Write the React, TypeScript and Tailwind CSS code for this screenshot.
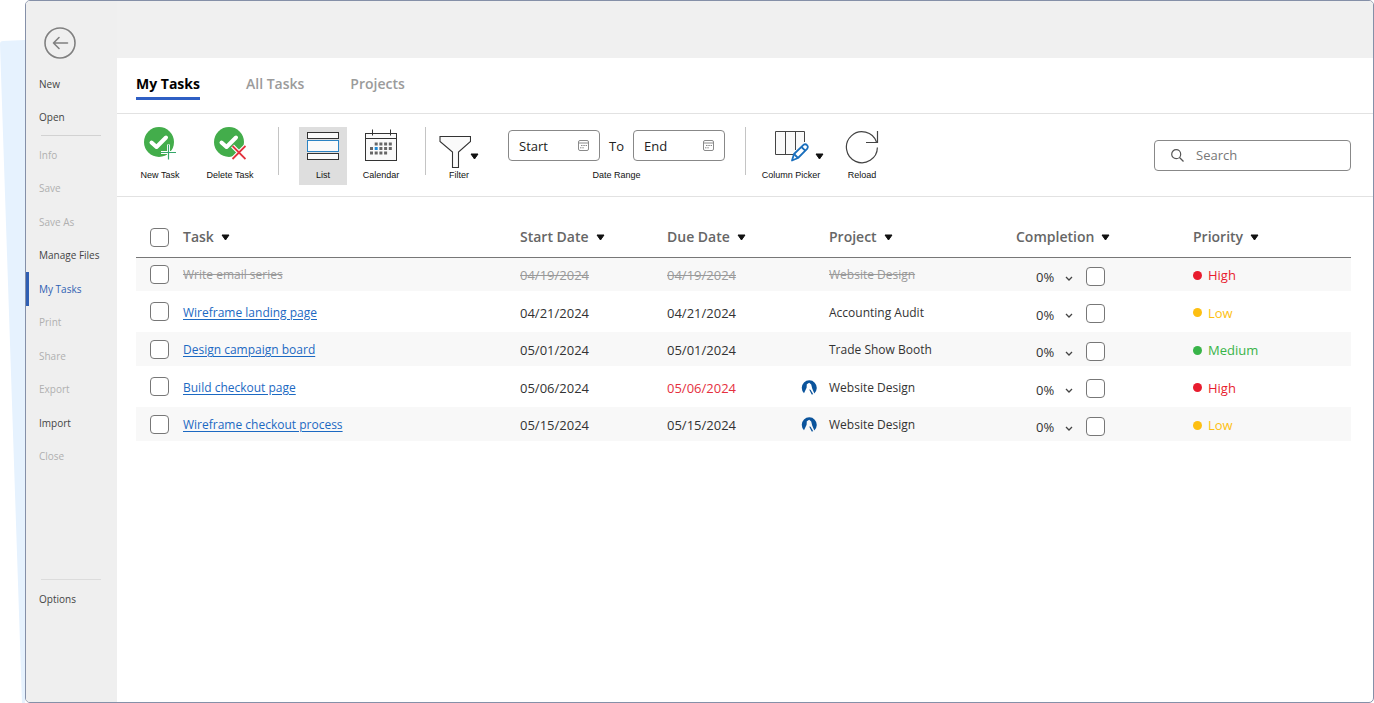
import { useState } from 'react';
import { clsx } from 'clsx';

type Priority = 'High' | 'Low' | 'Medium';

type Task = {
  name: string;
  start: string;
  due: string;
  project: string;
  priority: Priority;
  done?: boolean;
  overdue?: boolean;
  linked?: boolean;
};

const tasks: Task[] = [
  { name: 'Write email series', start: '04/19/2024', due: '04/19/2024', project: 'Website Design', priority: 'High', done: true },
  { name: 'Wireframe landing page', start: '04/21/2024', due: '04/21/2024', project: 'Accounting Audit', priority: 'Low' },
  { name: 'Design campaign board', start: '05/01/2024', due: '05/01/2024', project: 'Trade Show Booth', priority: 'Medium' },
  { name: 'Build checkout page', start: '05/06/2024', due: '05/06/2024', project: 'Website Design', priority: 'High', overdue: true, linked: true },
  { name: 'Wireframe checkout process', start: '05/15/2024', due: '05/15/2024', project: 'Website Design', priority: 'Low', linked: true },
];

const fileMenu = [
  { label: 'Info', enabled: false },
  { label: 'Save', enabled: false },
  { label: 'Save As', enabled: false },
  { label: 'Manage Files', enabled: true },
  { label: 'My Tasks', enabled: true },
  { label: 'Print', enabled: false },
  { label: 'Share', enabled: false },
  { label: 'Export', enabled: false },
  { label: 'Import', enabled: true },
  { label: 'Close', enabled: false },
];

const priorityText: Record<Priority, string> = {
  High: 'text-[#e81c2e]',
  Low: 'text-[#fdbf12]',
  Medium: 'text-[#38b449]',
};

function Caret() {
  return (
    <svg width="9" height="7" viewBox="0 0 9 7" className="shrink-0" aria-hidden="true">
      <path d="M1 1h7L4.5 6z" fill="#111" stroke="#111" strokeWidth="1" strokeLinejoin="round" />
    </svg>
  );
}

function CheckBadge() {
  return (
    <>
      <circle cx="15" cy="15" r="15" fill="#43ad4b" />
      <path d="M7.5 15.5l5 4.5 9.5-9.5" fill="none" stroke="#fff" strokeWidth="4" strokeLinecap="round" strokeLinejoin="round" />
    </>
  );
}

function NewTaskIcon() {
  return (
    <svg width="32" height="42" viewBox="0 0 32 42">
      <CheckBadge />
      <path d="M24.5 17.5v15M17 25.5h15" stroke="#fff" strokeWidth="3" />
      <path d="M24.5 18v14.5M17 25.5h15" stroke="#35a76a" strokeWidth="1.2" />
    </svg>
  );
}

function DeleteTaskIcon() {
  return (
    <svg width="32" height="42" viewBox="0 0 32 42">
      <CheckBadge />
      <path d="M18.5 19l13 13M31.5 19l-13 13" stroke="#fff" strokeWidth="4" />
      <path d="M18.5 19l13 13M31.5 19l-13 13" stroke="#e2343f" strokeWidth="1.8" />
    </svg>
  );
}

function ListIcon() {
  return (
    <svg width="32" height="42" viewBox="0 0 32 42" fill="#fafafa">
      <rect x="0.5" y="5.5" width="31" height="6" stroke="#333" />
      <rect x="0.5" y="13.5" width="31" height="11" stroke="#2b83c4" />
      <rect x="0.5" y="26.5" width="31" height="6" stroke="#333" />
    </svg>
  );
}

function CalendarIcon() {
  const cells = [
    [1, 0], [2, 0], [3, 0], [4, 0],
    [0, 1], [1, 1], [2, 1], [3, 1], [4, 1],
    [0, 2], [1, 2], [2, 2], [3, 2],
  ];
  return (
    <svg width="32" height="42" viewBox="0 0 32 42">
      <rect x="0.5" y="6.5" width="31" height="27" fill="#fafafa" stroke="#333" />
      <path d="M0.5 11.5h31M7.5 2.5v6M25.5 2.5v6" stroke="#333" />
      {cells.map(([col, row]) => (
        <rect
          key={`${col}-${row}`}
          x={5 + col * 4.7}
          y={15.5 + row * 4.5}
          width="3"
          height="3"
          fill={col === 1 && row === 1 ? '#1e88d4' : '#666'}
        />
      ))}
    </svg>
  );
}

function FilterIcon() {
  return (
    <svg width="32" height="42" viewBox="0 0 32 42">
      <path d="M1 9.5h30.5v5L19.5 25v15.5h-6V25L1 14.5z" fill="#fafafa" stroke="#333" strokeWidth="1.1" />
    </svg>
  );
}

function ColumnsIcon() {
  return (
    <svg width="34" height="42" viewBox="0 0 34 42">
      <path d="M18 27.5H.5v-23h29V15M10.5 4.5v23M20.5 4.5V23" fill="#fafafa" stroke="#444" />
      <g fill="#fff" stroke="#1a6fbd" strokeWidth="1.8" strokeLinejoin="round">
        <path d="M17 33.5l2-6.5L28.5 17.8c2.6-1.6 5.4 1 3.8 3.8L23 31z" />
        <path d="M19 27l4 4M26.5 20l4 3.8" />
      </g>
    </svg>
  );
}

function ReloadIcon() {
  return (
    <svg width="34" height="42" viewBox="0 0 34 42" fill="none" stroke="#444" strokeWidth="1.2">
      <path d="M32.4 20.5A15.500 15.500 0 1 1 31.5 15" />
      <path d="M32.5 4v11.5H21" />
    </svg>
  );
}

function MiniCalendar() {
  return (
    <svg width="11" height="11" viewBox="0 0 11 11" className="shrink-0" fill="none" stroke="#8a8a8a" aria-hidden="true">
      <rect x="0.5" y="0.5" width="10" height="10" rx="1.5" />
      <path d="M0.5 3h10" />
      <path d="M3 5.5h6M2 7.8h4.5" strokeDasharray="1.5 0.8" />
    </svg>
  );
}

function SourceIcon() {
  return (
    <svg width="16" height="16" viewBox="0 0 16 16" className="shrink-0" aria-hidden="true">
      <path d="M3 13.2A7.5 7.500 0 1 1 13.3 13.4L11.2 8.5 10.2 4.5 8.2 2.8 5.8 4.3 5.6 7.8z" fill="#0b549c" />
      <path d="M8.2 9.4l1.400.4 2.600 4.500-1.500.1z" fill="#0b549c" />
    </svg>
  );
}

function Checkbox({ label }: { label: string }) {
  return (
    <input
      type="checkbox"
      aria-label={label}
      className="block size-[19px] shrink-0 appearance-none rounded border border-[#777] bg-white checked:bg-[#2f5fc4]"
    />
  );
}

type ToolButtonProps = {
  label: string;
  className?: string;
  pressed?: boolean;
  onClick?: () => void;
  children: React.ReactNode;
};

function ToolButton({ label, className, pressed, onClick, children }: ToolButtonProps) {
  return (
    <button
      type="button"
      aria-pressed={pressed}
      onClick={onClick}
      className={clsx('flex h-[58px] shrink-0 flex-col items-center', pressed && 'bg-[#dedede]', className)}
    >
      <span className="flex h-[42px] items-center">{children}</span>
      <span className="whitespace-nowrap font-['Liberation_Sans',sans-serif] text-[9px] leading-3 text-[#111]">{label}</span>
    </button>
  );
}

function Divider() {
  return <div className="h-12 w-px shrink-0 bg-[#c4c4c4]" />;
}

function DateField({ label }: { label: string }) {
  return (
    <label className="flex h-[31px] w-[92px] items-center rounded border border-[#888] px-[10px]">
      <input
        type="text"
        aria-label={label}
        placeholder={label}
        className="w-full min-w-0 pt-[2px] text-[13px] text-[#222] outline-none placeholder:text-[#222]"
      />
      <MiniCalendar />
    </label>
  );
}

function SideItem({ label, enabled, active }: { label: string; enabled: boolean; active?: boolean }) {
  return (
    <button
      type="button"
      disabled={!enabled}
      className={clsx(
        'flex w-full items-center border-l-[3px] pl-[10px] text-left text-[10px] leading-4',
        active ? 'border-[#2f5fb3] text-[#2f5fb3]' : 'border-transparent',
        !active && (enabled ? 'text-[#444]' : 'text-[#b0b0b0]'),
      )}
    >
      {label}
    </button>
  );
}

function Sidebar() {
  return (
    <nav className="flex w-[91px] shrink-0 flex-col bg-[#efefef] pt-[26px]">
      <button type="button" aria-label="Back" className="ml-[18px] size-8">
        <svg width="32" height="32" viewBox="0 0 32 32" fill="none" stroke="#808080" strokeWidth="1.6">
          <circle cx="16" cy="16" r="15" />
          <path d="M23.5 16H9.500M15 10.5L9.500 16l5.500 5.500" strokeLinecap="round" strokeLinejoin="round" />
        </svg>
      </button>
      <div className="mt-2 grid auto-rows-[33px]">
        <SideItem label="New" enabled />
        <SideItem label="Open" enabled />
      </div>
      <hr className="mt-[2px] mr-4 ml-[15px] border-[#d2d2d2]" />
      <div className="mt-[2px] grid h-[335px] grid-rows-10">
        {fileMenu.map((item) => (
          <SideItem key={item.label} label={item.label} enabled={item.enabled} active={item.label === 'My Tasks'} />
        ))}
      </div>
      <hr className="mt-[106px] mr-4 ml-[15px] border-[#dcdcdc]" />
      <div className="mt-[2px] grid auto-rows-[33px]">
        <SideItem label="Options" enabled />
      </div>
    </nav>
  );
}

function Tabs() {
  const [current, setCurrent] = useState('My Tasks');
  return (
    <div className="flex h-[56px] gap-[46px] border-b border-[#e2e2e2] pt-3 pl-[19px]">
      {['My Tasks', 'All Tasks', 'Projects'].map((tab) => (
        <button
          key={tab}
          type="button"
          onClick={() => setCurrent(tab)}
          className={clsx(
            'h-[30px] border-b-[3px] text-[14px] leading-6',
            tab === current ? 'border-[#2f5fc4] font-bold text-black' : 'border-transparent font-semibold text-[#9b9b9b]',
          )}
        >
          {tab}
        </button>
      ))}
    </div>
  );
}

function Toolbar() {
  const [view, setView] = useState('List');
  return (
    <div className="flex h-[83px] items-start border-b border-[#e2e2e2] pt-[13px] pr-[22px] pl-[19px]">
      <ToolButton label="New Task" className="w-12">
        <NewTaskIcon />
      </ToolButton>
      <ToolButton label="Delete Task" className="ml-[18px] w-14">
        <DeleteTaskIcon />
      </ToolButton>
      <div className="mx-5">
        <Divider />
      </div>
      <ToolButton label="List" className="w-12" pressed={view === 'List'} onClick={() => setView('List')}>
        <ListIcon />
      </ToolButton>
      <ToolButton label="Calendar" className="ml-[10px] w-12" pressed={view === 'Calendar'} onClick={() => setView('Calendar')}>
        <CalendarIcon />
      </ToolButton>
      <div className="mr-[13px] ml-5">
        <Divider />
      </div>
      <ToolButton label="Filter" className="w-10">
        <FilterIcon />
        <span className="-ml-px pt-4">
          <Caret />
        </span>
      </ToolButton>
      <div className="ml-[29px] flex flex-col items-center pt-[3px]">
        <div className="flex items-center text-[13px] text-[#222]">
          <DateField label="Start" />
          <span className="w-[33px] pt-[2px] text-center">To</span>
          <DateField label="End" />
        </div>
        <span className="mt-2 font-['Liberation_Sans',sans-serif] text-[9px] leading-3 text-[#111]">Date Range</span>
      </div>
      <div className="mr-[14px] ml-5">
        <Divider />
      </div>
      <ToolButton label="Column Picker" className="w-[62px]">
        <span className="flex gap-[6px] pl-4">
          <ColumnsIcon />
          <span className="pt-[26px]">
            <Caret />
          </span>
        </span>
      </ToolButton>
      <ToolButton label="Reload" className="ml-5 w-10">
        <ReloadIcon />
      </ToolButton>
      <label className="mt-[13px] ml-auto flex h-[31px] w-[197px] items-center gap-3 rounded border border-[#888] pr-3 pl-4">
        <svg width="13" height="13" viewBox="0 0 13 13" className="shrink-0" fill="none" stroke="#555" strokeWidth="1.2">
          <circle cx="5.2" cy="5.2" r="4.5" />
          <path d="M8.5 8.5l4 4" />
        </svg>
        <input
          type="search"
          aria-label="Search"
          placeholder="Search"
          className="w-full min-w-0 text-[13px] outline-none placeholder:text-[#777]"
        />
      </label>
    </div>
  );
}

function HeaderCell({ label, className }: { label: string; className?: string }) {
  return (
    <th className={clsx('p-0 pt-[2px] text-left font-semibold', className)}>
      <button type="button" className="flex items-center gap-[7px] whitespace-nowrap">
        {label}
        <Caret />
      </button>
    </th>
  );
}

function TaskRow({ task }: { task: Task }) {
  const muted = task.done && 'text-[#9a9a9a] line-through';
  return (
    <tr className="h-[41px] text-[#333] odd:h-[34px] odd:bg-[#f8f8f8]">
      <td className="p-0 pl-[14px]">
        <Checkbox label={`Select ${task.name}`} />
      </td>
      <td className="p-0 pt-[2px] text-[12px]">
        {task.done ? (
          <span className={clsx(muted)}>{task.name}</span>
        ) : (
          <a href="#" className="text-[#1c69c2] underline underline-offset-2">
            {task.name}
          </a>
        )}
      </td>
      <td className={clsx('p-0 pt-[2px]', muted)}>{task.start}</td>
      <td className={clsx('p-0 pt-[2px]', muted, task.overdue && 'text-[#e5303e]')}>{task.due}</td>
      <td className="p-0 pt-[2px]">
        <div className="flex items-center gap-3">
          <span className="w-4">{task.linked && <SourceIcon />}</span>
          <span className={clsx('text-[12px]', muted)}>{task.project}</span>
        </div>
      </td>
      <td className="p-0 pt-1">
        <div className="flex items-center pl-5">
          <div className="relative mr-[13px] flex items-center">
            <select aria-label={`Completion of ${task.name}`} className="w-[37px] appearance-none bg-transparent pt-[2px] text-[13px]">
              <option>0%</option>
              <option>50%</option>
              <option>100%</option>
            </select>
            <svg width="8" height="5" viewBox="0 0 8 5" className="pointer-events-none absolute right-0 mt-1" fill="none" stroke="#444" strokeWidth="1.3">
              <path d="M1 1l3 3 3-3" />
            </svg>
          </div>
          <Checkbox label={`Complete ${task.name}`} />
        </div>
      </td>
      <td className={clsx('p-0 pt-[2px]', priorityText[task.priority])}>
        <span className="flex items-center gap-[6px]">
          <span className="size-[9px] rounded-full bg-current" />
          {task.priority}
        </span>
      </td>
    </tr>
  );
}

function TaskTable() {
  return (
    <div className="pt-[19px] pr-[22px] pl-[19px]">
      <table className="w-full table-fixed border-collapse text-[13px] leading-5">
        <thead>
          <tr className="h-[41px] border-b border-[#777] text-[14px] text-[#666]">
            <th className="w-[47px] p-0 pt-[3px] pl-[14px]">
              <Checkbox label="Select all tasks" />
            </th>
            <HeaderCell label="Task" />
            <HeaderCell label="Start Date" className="w-[147px]" />
            <HeaderCell label="Due Date" className="w-[134px]" />
            <HeaderCell label="Project" className="w-[215px] pl-7" />
            <HeaderCell label="Completion" className="w-[177px]" />
            <HeaderCell label="Priority" className="w-[158px]" />
          </tr>
        </thead>
        <tbody>
          {tasks.map((task) => (
            <TaskRow key={task.name} task={task} />
          ))}
        </tbody>
      </table>
    </div>
  );
}

export default function App() {
  return (
    <div className="relative flex min-h-screen bg-white pl-[25px] font-['Open_Sans','Noto_Sans',sans-serif]">
      {/* tinted sheet behind the window */}
      <svg className="absolute top-0 left-0" width="25" height="703" viewBox="0 0 25 703" aria-hidden="true">
        <path d="M25 40L3 41Q0 41 0 44L22 703h3z" fill="#e6f2fe" />
      </svg>
      <div className="relative flex flex-1 overflow-hidden rounded-[5px] border border-[#8590a8] bg-white">
        <Sidebar />
        <main className="min-w-0 flex-1">
          <div className="h-[57px] bg-[#f0f0f0]" />
          <Tabs />
          <Toolbar />
          <TaskTable />
        </main>
      </div>
    </div>
  );
}
